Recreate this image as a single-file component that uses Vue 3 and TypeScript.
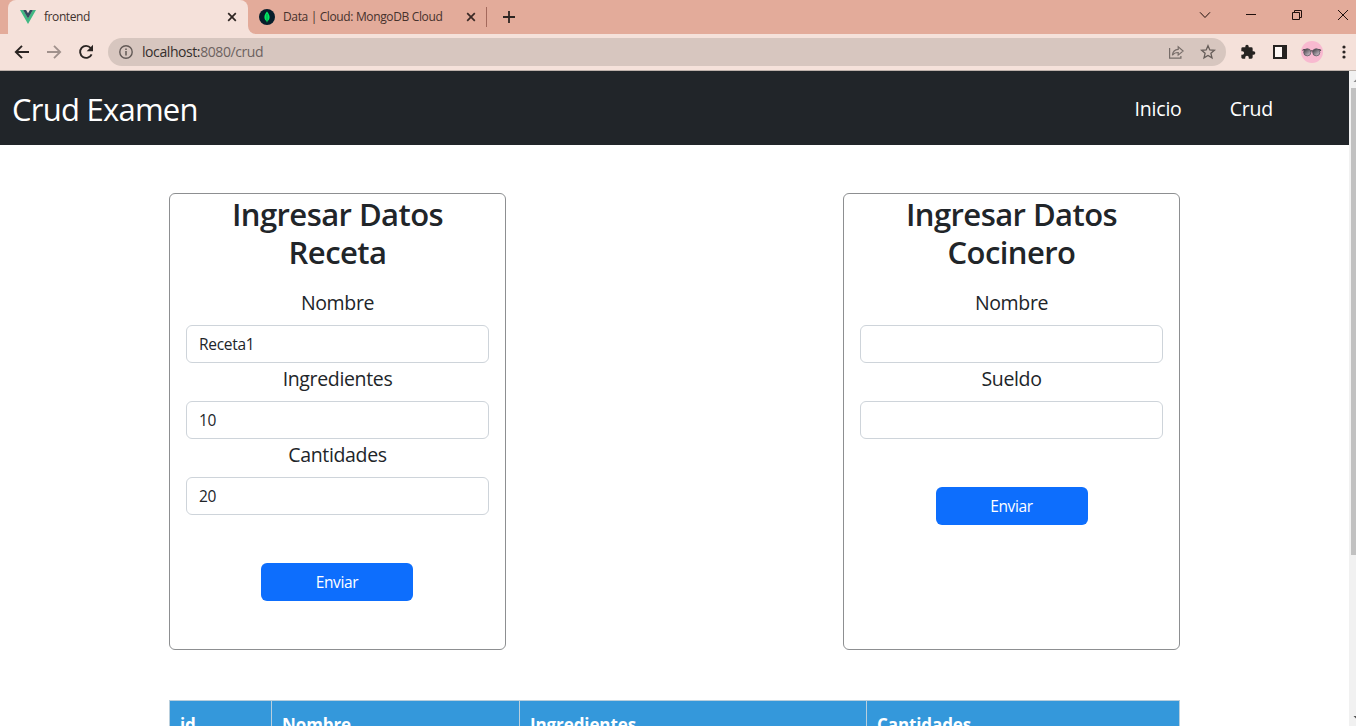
<script setup lang="ts">
import { ref } from 'vue'

interface Field { label: string; value: string; cls: string }
interface FormCard { title: string; subtitle: string; cls: string; fields: Field[] }

const forms = ref<FormCard[]>([
  {
    title: 'Ingresar Datos',
    subtitle: 'Receta',
    cls: 'receta',
    fields: [
      { label: 'Nombre', value: 'Receta1', cls: 'nombre' },
      { label: 'Ingredientes', value: '10', cls: 'ingredientes' },
      { label: 'Cantidades', value: '20', cls: 'cantidades' },
    ],
  },
  {
    title: 'Ingresar Datos',
    subtitle: 'Cocinero',
    cls: 'cocinero',
    fields: [
      { label: 'Nombre', value: '', cls: 'nombre' },
      { label: 'Sueldo', value: '', cls: 'sueldo' },
    ],
  },
])

const columns: string[] = ['id', 'Nombre', 'Ingredientes', 'Cantidades']
</script>

<template>
  <div class="window">
    <header class="tabstrip">
      <div class="tab active">
        <svg class="favicon" width="16" height="16" viewBox="0 0 16 16">
          <path d="M0 1h3.2L8 9.3 12.8 1H16L8 15z" fill="#41b883" />
          <path d="M3.1 1h3L8 4.3 9.9 1h3L8 9.5z" fill="#35495e" />
        </svg>
        <span class="tab-title t-front">frontend</span>
        <svg class="close" width="10" height="10" viewBox="0 0 10 10"><path d="M1.2 1.2l7.6 7.6M8.8 1.2L1.2 8.8" stroke="#2d2522" stroke-width="1.7" /></svg>
      </div>
      <div class="second-wrap">
        <div class="tab second">
          <svg class="favicon" width="16" height="16" viewBox="0 0 16 16">
            <circle cx="8" cy="8" r="8" fill="#071e2b" />
            <path d="M8 2.6C6.2 4.8 5.4 6.3 5.4 8.3c0 1.9 1 3.2 2.3 4.1L8 14l.3-1.6c1.4-.9 2.3-2.2 2.3-4.1 0-2-.9-3.5-2.6-5.7z" fill="#00ed64" />
            <path d="M8 5v8" stroke="#087d3e" stroke-width=".7" />
          </svg>
          <span class="tab-title t-mongo">Data | Cloud: MongoDB Cloud</span>
          <svg class="close" width="10" height="10" viewBox="0 0 10 10"><path d="M1.2 1.2l7.6 7.6M8.8 1.2L1.2 8.8" stroke="#3a2925" stroke-width="1.7" /></svg>
        </div>
      </div>
      <i class="separator"></i>
      <svg class="plus" width="12" height="12" viewBox="0 0 12 12"><path d="M6 0v12M0 6h12" stroke="#2d2522" stroke-width="1.8" /></svg>
      <div class="controls">
        <svg width="12" height="12" viewBox="0 0 12 12"><path d="M1 3.3l5 5.2 5-5.2" fill="none" stroke="#20100d" /></svg>
        <svg width="12" height="12" viewBox="0 0 12 12"><path d="M1 5.500h10" stroke="#20100d" /></svg>
        <svg width="12" height="12" viewBox="0 0 12 12"><path d="M1.5 3.5h7v7h-7zM3.5 3.5v-2h7v7h-2" fill="none" stroke="#20100d" /></svg>
        <svg width="12" height="12" viewBox="0 0 12 12"><path d="M1 1l10 10M11 1L1 11" stroke="#20100d" /></svg>
      </div>
    </header>

    <div class="toolbar">
      <div class="nav-icons">
        <svg width="16" height="16" viewBox="0 0 16 16"><path d="M15 8H2M8 1.8L1.8 8 8 14.2" fill="none" stroke="#2a2422" stroke-width="1.9" /></svg>
        <svg width="16" height="16" viewBox="0 0 16 16"><path d="M1 8h13M8 1.8L14.2 8 8 14.2" fill="none" stroke="#a0918c" stroke-width="1.8" /></svg>
        <svg width="16" height="16" viewBox="0 0 16 16"><path d="M13.6 10.3A6 6 0 1 1 12.7 4" fill="none" stroke="#2a2422" stroke-width="1.9" /><path d="M15 .8v6.4H8.7z" fill="#2a2422" /></svg>
      </div>
      <div class="omnibox">
        <svg width="14" height="14" viewBox="0 0 14 14"><circle cx="7" cy="7" r="6.2" fill="none" stroke="#625956" stroke-width="1.4" /><path d="M7 6.1V10.4M7 3.5v1.5" stroke="#625956" stroke-width="1.5" /></svg>
        <span class="url"><b>localhost:</b>8080/crud</span>
        <svg class="share" width="16" height="16" viewBox="0 0 16 16" fill="none" stroke="#766c68" stroke-width="1.2"><path d="M1.6 4v10.2h11.3V12M4.400 11.2c.4-3.7 2.4-5.6 5.8-5.8V2.7L15.200 7l-5 4.1V8.5C7.600 8.5 5.800 9.2 4.400 11.2z" /></svg>
        <svg class="star" width="16" height="16" viewBox="0 0 16 16"><path d="M8 1.7l1.8 4.2 4.6.4-3.5 3 1.1 4.5L8 11.4l-4 2.4 1.1-4.5-3.5-3 4.6-.4z" fill="none" stroke="#655c58" stroke-width="1.3" /></svg>
      </div>
      <div class="extensions">
        <svg width="16" height="16" viewBox="0 0 24 24"><path d="M20.5 11H19V7a2 2 0 0 0-2-2h-4V3.5a2.5 2.5 0 0 0-5 0V5H4a2 2 0 0 0-2 2v3.8h1.5a2.7 2.7 0 0 1 0 5.4H2V20c0 1.100.9 2 2 2h3.800v-1.500a2.700 2.700 0 0 1 5.400 0V22H17a2 2 0 0 0 2-2v-4h1.500a2.500 2.500 0 0 0 0-5z" fill="#262321" /></svg>
        <svg width="14" height="14" viewBox="0 0 14 14"><path d="M1 1h12v12H1z" fill="#fff8f5" stroke="#262321" stroke-width="2" /><path d="M9 1h4v12H9z" fill="#262321" /></svg>
        <svg width="22" height="22" viewBox="0 0 22 22">
          <defs><linearGradient id="lens" x2=".8" y2="1"><stop stop-color="#353539" /><stop offset="1" stop-color="#d1c3ce" /></linearGradient></defs>
          <circle cx="11" cy="11" r="11" fill="#f8b9d0" />
          <path d="M1.500 9.500q1-1.200 3-1M17 8.500q2 0 3 1M9.400 10.300q1.500-1 2.800 0" fill="none" stroke="#38343a" stroke-width="1.100" />
          <circle cx="6.300" cy="11.300" r="3.600" fill="url(#lens)" stroke="#56515a" stroke-width=".7" />
          <circle cx="15.300" cy="11.300" r="3.600" fill="url(#lens)" stroke="#56515a" stroke-width=".7" />
        </svg>
        <svg width="4" height="16" viewBox="0 0 4 16" fill="#2a2422"><circle cx="2" cy="3" r="1.600" /><circle cx="2" cy="8" r="1.600" /><circle cx="2" cy="13" r="1.600" /></svg>
      </div>
    </div>

    <div class="viewport">
      <div class="page">
        <nav class="navbar">
          <span class="brand">Crud Examen</span>
          <div class="links"><a>Inicio</a><a>Crud</a></div>
        </nav>
        <main class="content">
          <div class="cards">
            <form v-for="form in forms" :key="form.cls" class="card" @submit.prevent>
              <h2><span>{{ form.title }}</span><span>{{ form.subtitle }}</span></h2>
              <div v-for="field in form.fields" :key="field.label" class="field">
                <label :class="field.cls">{{ field.label }}</label>
                <input v-model="field.value" type="text" :aria-label="field.label" />
              </div>
              <button type="submit">Enviar</button>
            </form>
          </div>
          <div class="table">
            <div v-for="column in columns" :key="column" class="th">{{ column }}</div>
          </div>
        </main>
      </div>
      <div class="scrollbar">
        <svg class="arrow" width="7" height="17" viewBox="0 0 7 17"><path d="M4.500 11L8 7.500V11z" fill="#8a8a8a" /></svg>
        <i class="thumb"></i>
        <svg class="arrow" width="7" height="17" viewBox="0 0 7 17"><path d="M4.500 7L8 10.500V7z" fill="#505050" /></svg>
      </div>
    </div>
  </div>
</template>

<style>
body { margin: 0; overflow: hidden; }
</style>

<style scoped>
* { box-sizing: border-box; }
.window { width: 1356px; height: 726px; display: flex; flex-direction: column; overflow: hidden; background: #fff; color: #212529; font-family: "Open Sans", "Noto Sans", sans-serif; }
svg { display: block; flex: none; }
.tabstrip { height: 34px; flex: none; display: flex; align-items: center; background: #e3ab9a; padding-left: 8px; }
.tab { height: 34px; display: flex; align-items: center; font-size: 12px; color: #46312c; white-space: nowrap; }
.active { width: 240px; padding: 0 11px 0 12px; border-radius: 8px 8px 0 0; background: #f5e1da; }
.second-wrap { background: #f5e1da; }
.second { width: 238px; padding: 0 10px 0 11px; border-bottom-left-radius: 8px; background: #e3ab9a; }
.tab-title { margin-left: 8px; line-height: 16px; }
.t-front { color: #40322e; letter-spacing: -0.42px; }
.t-mongo { letter-spacing: -0.36px; }
.close { margin-left: auto; }
.separator { width: 1px; height: 20px; background: #a4695c; }
.plus { margin-left: 16px; }
.controls { margin-left: auto; display: flex; gap: 34px; padding: 0 7px 5px 0; }
.toolbar { height: 37px; flex: none; display: flex; align-items: center; background: #f5e1da; border-bottom: 1px solid #bdb1aa; }
.nav-icons { display: flex; gap: 16px; padding-left: 14px; width: 108px; }
.omnibox { width: 1118px; height: 28px; border-radius: 14px; background: #d7c6bf; display: flex; align-items: center; padding: 0 10px 0 11px; color: #6d625f; font-size: 14px; }
.url { margin-left: 9px; line-height: 20px; letter-spacing: -0.42px; }
.url b { color: #352f2d; font-weight: 400; }
.share { margin-left: auto; }
.star { margin-left: 16px; }
.extensions { display: flex; align-items: center; padding-left: 14px; }
.extensions svg + svg { margin-left: 17px; }
.extensions svg:nth-child(3) { margin-left: 14px; }
.extensions svg:last-child { margin-left: 19px; }
.viewport { flex: 1; min-height: 0; display: flex; }
.page { width: 1349px; overflow: hidden; }
.navbar { height: 74px; background: #212529; color: #fff; padding: 2px 76px 0 12px; display: flex; align-items: center; justify-content: space-between; }
.brand { font-size: 31px; line-height: 48px; letter-spacing: -0.75px; white-space: nowrap; }
.links { display: flex; gap: 48px; font-size: 19.5px; line-height: 30px; letter-spacing: -0.2px; }
.content { width: 1011px; margin: 48px 0 0 169px; }
.cards { display: flex; justify-content: space-between; }
.card { width: 337px; height: 457px; border: 1px solid #8d8f91; border-radius: 6px; padding: 1px 16px 0; }
h2 { margin: 0; display: flex; flex-direction: column; align-items: center; font-size: 31px; font-weight: 600; line-height: 38px; height: 92px; }
h2 span { white-space: nowrap; letter-spacing: -0.56px; }
.field { display: flex; flex-direction: column; align-items: center; height: 76px; }
label { flex: none; font-size: 19.5px; line-height: 30px; height: 38px; padding-top: 1px; letter-spacing: -0.35px; white-space: nowrap; }
input { flex: none; width: 303px; height: 38px; margin: 0; border: 1px solid #ced4da; border-radius: 6px; padding: 6px 12px; outline: 0; font: 15.5px/24px "Open Sans", sans-serif; letter-spacing: -0.3px; color: #212529; background: #fff; }
button { display: block; width: 152px; height: 38px; margin: 48px auto 0; border: 0; border-radius: 6px; padding: 0; background: #0d6efd; color: #fff; font: 15.5px/24px "Open Sans", sans-serif; letter-spacing: -0.35px; }
.card:first-child button { margin-left: 75px; }
.table { margin-top: 50px; display: grid; grid-template-columns: 101px 248px 347px 313px; height: 46px; border: solid #b9cfdd; border-width: 1px 1px 0; background: #3498db; color: #fff; }
.th { padding: 12px 10px; font-size: 17px; line-height: 24px; letter-spacing: -0.1px; font-weight: 700; border-left: 1px solid #b9cfdd; }
.th:first-child { border-left: 0; }
.scrollbar { width: 7px; background: #f1f1f1; display: flex; flex-direction: column; align-items: flex-end; }
.thumb { width: 5px; height: 467px; margin-bottom: auto; background: #c1c1c1; }
</style>
